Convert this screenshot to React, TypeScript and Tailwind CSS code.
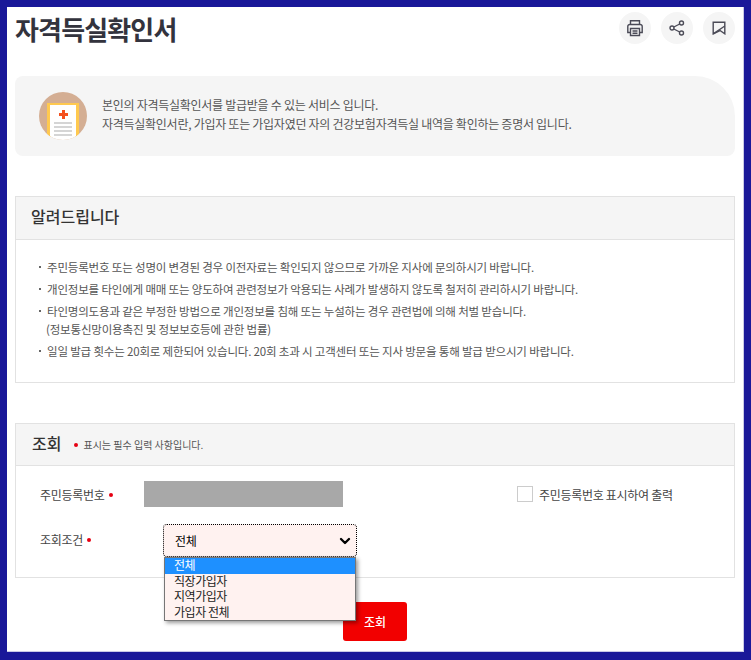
import { ChevronDown } from 'lucide-react';

const notices = [
  ['주민등록번호 또는 성명이 변경된 경우 이전자료는 확인되지 않으므로 가까운 지사에 문의하시기 바랍니다.'],
  ['개인정보를 타인에게 매매 또는 양도하여 관련정보가 악용되는 사례가 발생하지 않도록 철저히 관리하시기 바랍니다.'],
  ['타인명의도용과 같은 부정한 방법으로 개인정보를 침해 또는 누설하는 경우 관련법에 의해 처벌 받습니다.', '(정보통신망이용촉진 및 정보보호등에 관한 법률)'],
  ['일일 발급 횟수는 20회로 제한되어 있습니다. 20회 초과 시 고객센터 또는 지사 방문을 통해 발급 받으시기 바랍니다.'],
];

const options = ['전체', '직장가입자', '지역가입자', '가입자 전체'];

function RoundButton({ children }: { children: React.ReactNode }) {
  return (
    <button className="flex h-8 w-8 items-center justify-center rounded-full bg-[#f5f5f5] text-[#4b4b57]">
      {children}
    </button>
  );
}

function RequiredDot() {
  return <span className="inline-block h-[4px] w-[4px] rounded-full bg-[#e60012]" />;
}

export default function App() {
  return (
    <div className="h-[660px] w-[751px] overflow-hidden bg-[#1a1899] pt-[7px] pr-[7px] pb-[8px] pl-[7px] text-[#444] [font-family:'Noto_Sans_CJK_KR','Noto_Sans',sans-serif]">
      <div className="h-full border-r border-b border-[#c9c9e6] bg-white px-[8px]">
        {/* title */}
        <div className="flex h-[69px] items-start justify-between">
          <h1 className="mt-[4px] text-[26px] leading-[36px] font-bold tracking-[-0.85px] text-[#33333d]">자격득실확인서</h1>
          <div className="mt-[5px] flex gap-[10px]">
            <RoundButton>
              <svg width="18" height="18" viewBox="0 0 18 18" fill="none" stroke="currentColor" strokeWidth="1.4">
                <path d="M4.5 5.5V1.8h9v3.7" />
                <path d="M4 13.5H1.8V7.5a2 2 0 0 1 2-2h10.400a2 2 0 0 1 2 2v6H14" />
                <path d="M4.500 9.500h9v7h-9z" />
                <path d="M6.500 12h5M6.500 14.300h5" />
              </svg>
            </RoundButton>
            <RoundButton>
              <svg width="16" height="18" viewBox="0 0 16 18" fill="none" stroke="currentColor" strokeWidth="1.4">
                <circle cx="12.500" cy="4" r="2" />
                <circle cx="3" cy="9" r="2" />
                <circle cx="12.500" cy="14" r="2" />
                <path d="M4.800 8 10.700 5M4.800 10l5.900 3" />
              </svg>
            </RoundButton>
            <RoundButton>
              <svg width="14" height="14" viewBox="0 0 14 14" fill="none" stroke="currentColor" strokeWidth="1.400">
                <path d="M1.200 1.200h11.600v11.600L8 9.500l-6.800 3.300z" />
                <path d="M1.200 12.800 12.800 5" />
              </svg>
            </RoundButton>
          </div>
        </div>

        {/* info */}
        <div className="flex h-[80px] w-[720px] items-center gap-[15px] rounded-tl-lg rounded-tr-[40px] rounded-br-lg rounded-bl-lg bg-[#f5f5f5] pl-[24px]">
          <div className="relative h-[48px] w-[48px] shrink-0 overflow-hidden rounded-full bg-[#d4ae93]">
            <div className="absolute top-[11px] left-[8px] h-[34px] w-[32px] bg-[#ffc94f]" />
            <div className="absolute top-[13px] left-[11px] flex h-[35px] w-[26px] flex-col items-center bg-white">
              <div className="relative mt-[5px] h-[9px] w-[9px]">
                <div className="absolute top-0 left-[3px] h-[9px] w-[3px] bg-[#f4511e]" />
                <div className="absolute top-[3px] left-0 h-[3px] w-[9px] bg-[#f4511e]" />
              </div>
              <div className="mt-[3px] flex w-[18px] flex-col gap-[2px]">
                <div className="h-[2px] bg-[#d5d5d5]" />
                <div className="h-[2px] bg-[#d5d5d5]" />
                <div className="h-[2px] bg-[#d5d5d5]" />
                <div className="h-[2px] bg-[#d5d5d5]" />
              </div>
            </div>
          </div>
          <div className="pb-[4px] text-[12px] leading-[19px] tracking-[-0.27px] text-[#555]">
            <p>본인의 자격득실확인서를 발급받을 수 있는 서비스 입니다.</p>
            <p>자격득실확인서란, 가입자 또는 가입자였던 자의 건강보험자격득실 내역을 확인하는 증명서 입니다.</p>
          </div>
        </div>

        {/* notice */}
        <section className="mt-[40px] h-[187px] w-[720px] border border-[#e2e2e2]">
          <h2 className="flex h-[43px] items-center border-b border-[#e2e2e2] bg-[#f5f5f5] pb-[4px] pl-[15px] text-[16px] font-medium text-[#333]">
            알려드립니다
          </h2>
          <ul className="pt-[18px] pl-[23px] text-[11.5px] leading-[18px] tracking-[-0.18px] text-[#555]">
            {notices.map((lines) => (
              <li key={lines[0]} className="relative mb-[4px] pl-[8px]">
                <span className="absolute top-[8px] left-0 h-[2px] w-[2px] bg-[#666]" />
                {lines.map((line) => (
                  <p key={line} className={line.startsWith('(') ? '-ml-[1px]' : ''}>{line}</p>
                ))}
              </li>
            ))}
          </ul>
        </section>

        {/* search */}
        <section className="relative mt-[40px] h-[155px] w-[720px] border border-[#e2e2e2]">
          <div className="flex h-[42px] items-center border-b border-[#e2e2e2] bg-[#f5f5f5] pl-[16px]">
            <h2 className="pb-[4px] text-[16px] font-medium text-[#333]">조회</h2>
            <span className="ml-[13px] flex items-center gap-[5px] text-[10px] text-[#555]">
              <RequiredDot />
              표시는 필수 입력 사항입니다.
            </span>
          </div>

          <div className="mt-[15px] flex h-[26px] items-center pl-[24px] text-[12px] tracking-[-0.3px] text-[#444]">
            <span className="flex w-[104px] items-center gap-[5px] pt-[2px]">
              주민등록번호 <RequiredDot />
            </span>
            <div className="h-[26px] w-[199px] bg-[#a8a8a8]" />
            <div className="ml-[174px] flex items-center gap-[6px]">
              <span className="h-[16px] w-[16px] border border-[#ccc] bg-white" />
              <span className="pt-[2px]">주민등록번호 표시하여 출력</span>
            </div>
          </div>

          <div className="mt-[17px] flex h-[33px] items-center pl-[24px] text-[12px] tracking-[-0.3px] text-[#444]">
            <span className="flex w-[123px] items-center gap-[4px] pb-[2px]">
              조회조건 <RequiredDot />
            </span>
            <div className="flex h-[33px] w-[194px] items-center justify-between rounded-[4px] border border-dotted border-black bg-[#fff2f0] pr-[3px] pl-[11px] text-black">
              전체
              <ChevronDown size={16} strokeWidth={3.5} />
            </div>
          </div>

          {/* open select list */}
          <div className="absolute top-[133px] left-[148px] z-10 w-[192px] border border-[#767676] bg-[#fff2f0] text-[12px] leading-[13px] tracking-[-0.45px] text-[#222] shadow-[2px_2px_4px_rgba(0,0,0,0.4)]">
            {options.map((option, index) => (
              <div key={option} className={index === 0 ? 'bg-[#1e90ff] pb-[2.5px] pl-[9px] text-white' : 'pb-[2.5px] pl-[9px]'}>
                {option}
              </div>
            ))}
          </div>
        </section>

        <div className="mt-[24px] flex justify-center">
          <button className="h-[39px] w-[64px] rounded-[3px] bg-[#f20000] text-[12px] font-medium text-white">조회</button>
        </div>
      </div>
    </div>
  );
}
